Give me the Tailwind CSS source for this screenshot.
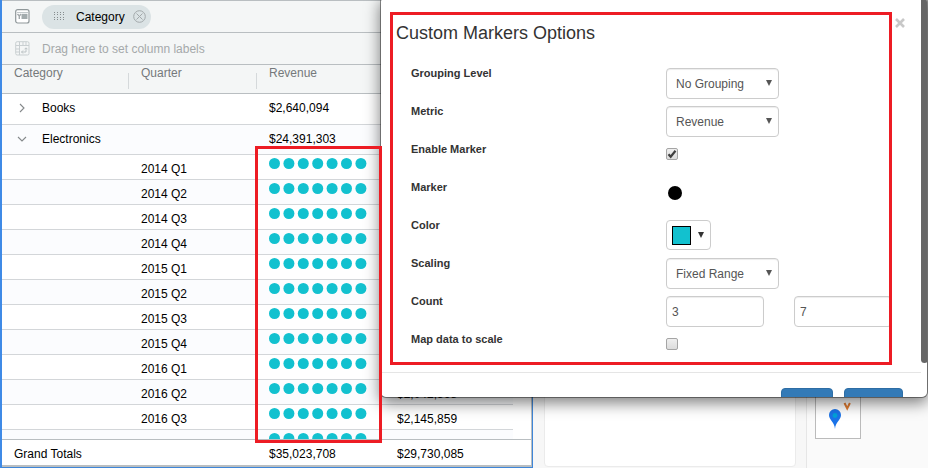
<!DOCTYPE html>
<html lang="en">
<head>
<meta charset="utf-8">
<title>Custom Markers Options</title>
<script src="https://cdn.jsdelivr.net/npm/@tailwindcss/browser@4"></script>
</head>
<body class="relative flex h-screen overflow-hidden bg-[#f7f7f7] font-['Liberation_Sans',Arial,sans-serif] text-xs text-black">

<main class="flex w-[533px] shrink-0 flex-col border-r border-b border-l-2 border-[#3f86d8] border-l-[#3f8ae6]">
  <div class="flex min-h-0 flex-1 flex-col border-t border-r border-b-2 border-[#b9bec1] bg-white">
    <div class="flex h-8 shrink-0 items-center gap-3 border-b border-[#b9bec1] bg-[#f4f6f6] pl-3">
      <svg class="ml-px size-[15px] shrink-0" viewBox="0 0 15 15" fill="none"><rect x=".7" y=".7" width="13.300" height="13.300" rx="2" fill="#fff" stroke="#8f9799" stroke-width="1.200"/><path d="M2 3.500h11" stroke="#c3c9cb" /><path d="M2.500 5l1.800 2L6 5M4.300 7v3" stroke="#a3a9ab" stroke-width="1.400"/><rect x="6.500" y="4.800" width="6" height="5.200" fill="#a3abad"/></svg>
      <div class="flex h-6 w-[109px] items-center rounded-full bg-[#dbe3e5] pl-3">
        <svg class="h-[9px] w-[11px]" viewBox="0 0 11 9" fill="#868c8e"><path d="M0 0h1v1H0zM3 0h1v1H3zM6 0h1v1H6zM9 0h1v1H9zM0 2h1v1H0zM3 2h1v1H3zM6 2h1v1H6zM9 2h1v1H9zM0 5h1v1H0zM3 5h1v1H3zM6 5h1v1H6zM9 5h1v1H9zM0 7h1v1H0zM3 7h1v1H3zM6 7h1v1H6zM9 7h1v1H9z"/></svg>
        <span class="ml-[11px]">Category</span>
        <button type="button" aria-label="Remove Category" class="ml-2"><svg class="size-[13px]" viewBox="0 0 13 13" fill="none" stroke="#a3a9ab"><circle cx="6.500" cy="6.500" r="5.800"/><path d="M3.500 3.500l6 6M9.500 3.500l-6 6"/></svg></button>
      </div>
    </div>
    <div class="flex h-8 shrink-0 items-center gap-3 border-b border-[#b9bec1] bg-[#f4f6f6] pl-3 text-[#a5a9aa]">
      <svg class="ml-px size-[15px] shrink-0" viewBox="0 0 15 15" fill="none" stroke="#c9cfd1"><rect x=".7" y=".7" width="13.300" height="13.300" rx="1.500"/><path d="M1 4.500h13M4.500 1v13M8 1v3.500M11 1v3.500M1 8h3.500M1 11h3.500"/><path d="M6.500 11h4.500V7M8 9.500L6.500 11 8 12.500M9.500 8.300L11 6.800l1.500 1.500" stroke="#bcc3c5"/></svg>
      <span>Drag here to set column labels</span>
    </div>
    <div class="min-h-0 flex-1 overflow-hidden">
      <table class="w-[511px] table-fixed border-separate border-spacing-0 text-left">
        <colgroup><col class="w-[127px]"><col class="w-[128px]"><col class="w-[128px]"><col class="w-[128px]"></colgroup>
        <thead class="text-[#75797b]">
          <tr class="h-[29px] bg-[#f4f6f6] align-top leading-4 [&>th]:border-b [&>th]:border-[#b9bec1] [&>th]:p-0 [&>th]:font-normal">
            <th><div class="flex justify-between pl-3"><span>Category</span><i class="mt-2 h-4 w-px bg-[#d5d9db]"></i></div></th>
            <th><div class="flex justify-between pl-3"><span>Quarter</span><i class="mt-2 h-4 w-px bg-[#d5d9db]"></i></div></th>
            <th><div class="flex pl-3">Revenue</div></th>
            <th></th>
          </tr>
        </thead>
        <tbody id="rows" class="[&_td]:border-b [&_td]:border-[#d3d6d9] [&_td]:p-0 [&_td]:pl-3 [&>tr:nth-child(even)]:bg-[#fbfcfe]">
          <tr class="h-[31px] [&>td]:pb-[2px]!"><td colspan="2"><div class="flex items-center"><button type="button" aria-label="Expand Books" class="mr-3 flex w-4 justify-center"><svg class="size-[10px]" viewBox="0 0 10 10" fill="none" stroke="#85898b" stroke-width="1.100"><path d="M3 1l4 4-4 4"/></svg></button>Books</div></td><td>$2,640,094</td><td></td></tr>
          <tr class="h-[30px] [&>td]:pb-[2px]!"><td colspan="2"><div class="flex items-center"><button type="button" aria-label="Collapse Electronics" class="mr-3 flex w-4 justify-center"><svg class="size-[10px]" viewBox="0 0 10 10" fill="none" stroke="#85898b" stroke-width="1.100"><path d="M1 3l4 4 4-4"/></svg></button>Electronics</div></td><td>$24,391,303</td><td></td></tr>
        </tbody>
      </table>
    </div>
    <div class="shrink-0 border-t border-[#b9bec1]">
      <table class="w-[511px] table-fixed border-collapse">
        <colgroup><col class="w-[127px]"><col class="w-[128px]"><col class="w-[128px]"><col class="w-[128px]"></colgroup>
        <tbody><tr class="h-[25px] [&>td]:p-0 [&>td]:pt-0.5 [&>td]:pl-3"><td colspan="2">Grand Totals</td><td>$35,023,708</td><td>$29,730,085</td></tr></tbody>
      </table>
    </div>
  </div>
</main>

<section class="mb-px ml-[11px] w-[252px] shrink-0 rounded border border-[#ebebeb] bg-white"></section>
<aside class="ml-[10px] flex flex-1 items-start border-l border-[#e6e6e6] bg-[#fafafa] pt-[390px] pl-2">
  <div class="h-[49px] w-[46px] border border-[#bbb] bg-white">
    <svg class="size-full" viewBox="0 0 44 47"><path d="M19 38C18.500 31 13 29 13 24a6 6 0 0 1 12 0C25 29 19.500 31 19 38z" fill="#1a73e8"/><circle cx="19" cy="24.500" r="2.400" fill="#00a2d8"/><path d="M28.500 12l2.700 5.500 2.700-5.500" fill="none" stroke="#e07b30" stroke-width="2"/></svg>
  </div>
</aside>

<div role="dialog" aria-labelledby="dialog-title" class="absolute -top-1 right-0 left-[380px] overflow-hidden rounded-md border border-black/40 bg-white bg-clip-padding text-[#333] shadow-[0_5px_15px_rgba(0,0,0,0.5)]">
  <div class="flex items-start">
    <div class="min-w-0 flex-1 pt-[15px]">
      <div class="flex items-start">
        <form class="ml-[9px] h-[353px] min-w-0 flex-1 overflow-hidden border-3 border-[#ed1c24] pl-[3px]">
          <h1 id="dialog-title" class="mt-2 mb-[25px] text-lg leading-5">Custom Markers Options</h1>
          <div class="grid auto-rows-[38px] grid-cols-[255px_1fr] items-start pl-[15px] [&>.lb]:text-[11px] [&>.lb]:leading-[10px] [&>.lb]:font-bold">
            <label class="lb" for="grouping">Grouping Level</label>
            <div class="relative w-[113px]"><select id="grouping" class="h-[31px] w-full appearance-none rounded border border-[#ccc] bg-white pl-[9px] text-[#555] shadow-[inset_0_1px_1px_rgba(0,0,0,0.075)]"><option>No Grouping</option></select><svg class="pointer-events-none absolute top-3 right-[7px] h-[6px] w-[6px]" viewBox="0 0 6 6"><path d="M0 0h6L3 6z" fill="#555"/></svg></div>
            <label class="lb" for="metric">Metric</label>
            <div class="relative w-[113px]"><select id="metric" class="h-[31px] w-full appearance-none rounded border border-[#ccc] bg-white pl-[9px] text-[#555] shadow-[inset_0_1px_1px_rgba(0,0,0,0.075)]"><option>Revenue</option></select><svg class="pointer-events-none absolute top-3 right-[7px] h-[6px] w-[6px]" viewBox="0 0 6 6"><path d="M0 0h6L3 6z" fill="#555"/></svg></div>
            <label class="lb" for="enable">Enable Marker</label>
            <div class="grid w-3 pt-1"><input id="enable" type="checkbox" checked class="peer col-start-1 row-start-1 size-3 appearance-none rounded-xs border border-[#a5a5a5] bg-linear-to-b from-[#efefef] to-[#dcdcdc]"><svg class="pointer-events-none invisible col-start-1 row-start-1 size-3 peer-checked:visible" viewBox="0 0 12 12" fill="none" stroke="#3f3f3f" stroke-width="2.200"><path d="M2.500 6.200l2.200 2.500L9.500 2.800"/></svg></div>
            <span class="lb">Marker</span>
            <button type="button" aria-label="Circle marker" class="mt-1 ml-[2px] size-[14px] rounded-full bg-black"></button>
            <label class="lb" for="color">Color</label>
            <button id="color" type="button" class="flex h-[30px] w-[45px] items-center gap-[7px] rounded border border-[#ccc] bg-white pl-[5px]"><span class="size-[19px] border border-black bg-[#12c1cf]"></span><svg class="size-[6px]" viewBox="0 0 6 6"><path d="M0 0h6L3 6z" fill="#333"/></svg></button>
            <label class="lb" for="scaling">Scaling</label>
            <div class="relative w-[113px]"><select id="scaling" class="h-[31px] w-full appearance-none rounded border border-[#ccc] bg-white pl-[9px] text-[#555] shadow-[inset_0_1px_1px_rgba(0,0,0,0.075)]"><option>Fixed Range</option></select><svg class="pointer-events-none absolute top-3 right-[7px] h-[6px] w-[6px]" viewBox="0 0 6 6"><path d="M0 0h6L3 6z" fill="#555"/></svg></div>
            <label class="lb" for="min">Count</label>
            <div class="flex gap-[30px]"><input id="min" type="text" value="3" class="h-[31px] w-[98px] shrink-0 rounded border border-[#ccc] px-[5px] text-[#555] shadow-[inset_0_1px_1px_rgba(0,0,0,0.075)]"><input type="text" value="7" aria-label="Maximum count" class="h-[31px] w-[98px] shrink-0 rounded border border-[#ccc] px-[5px] text-[#555] shadow-[inset_0_1px_1px_rgba(0,0,0,0.075)]"></div>
            <label class="lb" for="map">Map data to scale</label>
            <div class="grid w-3 pt-1"><input id="map" type="checkbox" class="peer col-start-1 row-start-1 size-3 appearance-none rounded-xs border border-[#a5a5a5] bg-linear-to-b from-[#efefef] to-[#dcdcdc]"><svg class="pointer-events-none invisible col-start-1 row-start-1 size-3 peer-checked:visible" viewBox="0 0 12 12" fill="none" stroke="#3f3f3f" stroke-width="2.200"><path d="M2.500 6.200l2.200 2.500L9.500 2.800"/></svg></div>
          </div>
        </form>
        <button type="button" aria-label="Close" class="mt-[6px] mr-4 ml-[3px]"><svg class="size-[10px]" viewBox="0 0 10 10" fill="none" stroke="#c8c8c8" stroke-width="2.600"><path d="M1 1l8 8M9 1L1 9"/></svg></button>
      </div>
      <footer class="mt-[7px] flex h-[25px] justify-end gap-[11px] overflow-hidden border-t border-[#e5e5e5] pt-[15px] pr-[18px]">
        <button type="button" aria-label="Apply" class="h-[30px] w-[52px] rounded border border-[#2e6da4] bg-[#337ab7]"></button>
        <button type="button" aria-label="Cancel" class="h-[30px] w-[59px] rounded border border-[#2e6da4] bg-[#337ab7]"></button>
      </footer>
    </div>
    <div class="-mr-px h-[366px] w-[7px] shrink-0 rounded bg-[#666]"></div>
  </div>
</div>

<div class="pointer-events-none absolute top-[146px] left-[255px] h-[297px] w-[127px] border-3 border-[#ed1c24]"></div>

<script>
  const quarters = [['2014 Q1'], ['2014 Q2'], ['2014 Q3'], ['2014 Q4'], ['2015 Q1'], ['2015 Q2'], ['2015 Q3'], ['2015 Q4'], ['2016 Q1'], ['2016 Q2', '$2,042,568'], ['2016 Q3', '$2,145,859'], ['']];
  const dots = [0, 1, 2, 3, 4, 5, 6].map(i => `<circle cx="${5.5 + i * 14.4}" cy="5.5" r="5.5"/>`).join('');
  document.getElementById('rows').insertAdjacentHTML('beforeend', quarters.map(([q, v]) =>
    `<tr class="h-[25px]"><td></td><td><div class="pt-1 leading-4">${q}</div></td><td class="align-top"><svg class="mt-[3px] h-[11px] w-[98px]" viewBox="0 0 98 11" fill="#12c1cf">${dots}</svg></td><td><div class="pt-1 leading-4">${v || ''}</div></td></tr>`).join(''));
</script>
</body>
</html>
